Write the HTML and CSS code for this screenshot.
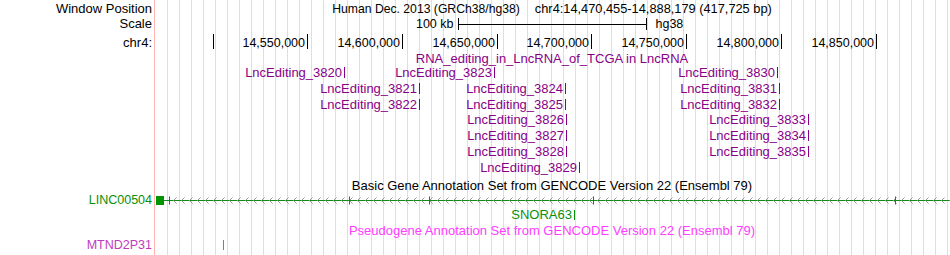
FILE: index.html
```html
<!DOCTYPE html>
<html lang="en">
<head>
    <meta charset="UTF-8">
    <meta name="viewport" content="width=device-width, initial-scale=1.0">
    <title>chr4:14,470,455-14,888,179 - Genome Browser</title>
    <link rel="stylesheet" href="styles.css">
</head>
<body>
    <div class="browser">
        <!-- position / scale / base ruler -->
        <div class="track">
            <div class="row row-pos">
                <div class="lbl">Window Position</div>
                <div class="trk center"><span class="assembly">Human Dec. 2013 (GRCh38/hg38)</span><span class="range">chr4:14,470,455-14,888,179 (417,725 bp)</span></div>
            </div>
            <div class="row row-scale">
                <div class="lbl">Scale</div>
                <div class="trk">
                    <div class="ruler"><span class="kb">100 kb</span><span class="db">hg38</span></div>
                </div>
            </div>
            <div class="row row-chr">
                <div class="lbl">chr4:</div>
                <div class="trk">
                    <span class="item coord" style="right:736px"></span>
                    <span class="item coord" style="right:642px">14,550,000</span>
                    <span class="item coord" style="right:547px">14,600,000</span>
                    <span class="item coord" style="right:452px">14,650,000</span>
                    <span class="item coord" style="right:358px">14,700,000</span>
                    <span class="item coord" style="right:263px">14,750,000</span>
                    <span class="item coord" style="right:168px">14,800,000</span>
                    <span class="item coord" style="right:73px">14,850,000</span>
                </div>
            </div>
        </div>

        <!-- RNA editing in lncRNA -->
        <div class="track lnc">
            <div class="row row-title">
                <div class="lbl"></div>
                <div class="trk center">RNA_editing_in_LncRNA_of_TCGA in LncRNA</div>
            </div>
            <div class="row">
                <div class="lbl"></div>
                <div class="trk">
                    <span class="item" style="right:605px">LncEditing_3820</span>
                    <span class="item" style="right:455px">LncEditing_3823</span>
                    <span class="item" style="right:172px">LncEditing_3830</span>
                </div>
            </div>
            <div class="row">
                <div class="lbl"></div>
                <div class="trk">
                    <span class="item" style="right:530px">LncEditing_3821</span>
                    <span class="item" style="right:384px">LncEditing_3824</span>
                    <span class="item" style="right:170px">LncEditing_3831</span>
                </div>
            </div>
            <div class="row">
                <div class="lbl"></div>
                <div class="trk">
                    <span class="item" style="right:530px">LncEditing_3822</span>
                    <span class="item" style="right:384px">LncEditing_3825</span>
                    <span class="item" style="right:170px">LncEditing_3832</span>
                </div>
            </div>
            <div class="row">
                <div class="lbl"></div>
                <div class="trk">
                    <span class="item" style="right:383px">LncEditing_3826</span>
                    <span class="item" style="right:141px">LncEditing_3833</span>
                </div>
            </div>
            <div class="row">
                <div class="lbl"></div>
                <div class="trk">
                    <span class="item" style="right:383px">LncEditing_3827</span>
                    <span class="item" style="right:141px">LncEditing_3834</span>
                </div>
            </div>
            <div class="row">
                <div class="lbl"></div>
                <div class="trk">
                    <span class="item" style="right:383px">LncEditing_3828</span>
                    <span class="item" style="right:141px">LncEditing_3835</span>
                </div>
            </div>
            <div class="row">
                <div class="lbl"></div>
                <div class="trk">
                    <span class="item" style="right:370px">LncEditing_3829</span>
                </div>
            </div>
        </div>

        <!-- GENCODE basic -->
        <div class="track gencode">
            <div class="row row-title">
                <div class="lbl"></div>
                <div class="trk center">Basic Gene Annotation Set from GENCODE Version 22 (Ensembl 79)</div>
            </div>
            <div class="row">
                <div class="lbl">LINC00504</div>
                <div class="trk">
                    <svg class="gene" width="796" height="16" viewBox="0 0 796 16">
                        <defs>
                            <pattern id="chevrons" x="19" y="4" width="8" height="9" patternUnits="userSpaceOnUse">
                                <path d="M3.5 1.5 L0.5 4.5 L3.5 7.5"/>
                            </pattern>
                        </defs>
                        <line class="intron" x1="10" y1="8.5" x2="796" y2="8.5"/>
                        <rect class="chev" x="19" y="4" width="777" height="9" fill="url(#chevrons)"/>
                        <rect class="exon" x="2" y="4" width="8" height="9"/>
                        <path class="exon-tick" d="M15.5 4.5v8M195.5 4.5v8M275.5 4.5v8M439.5 4.5v8M741.5 4.5v8"/>
                    </svg>
                </div>
            </div>
            <div class="row">
                <div class="lbl"></div>
                <div class="trk">
                    <span class="item" style="right:375px">SNORA63</span>
                </div>
            </div>
        </div>

        <!-- GENCODE pseudogenes -->
        <div class="track pseudo">
            <div class="row row-title">
                <div class="lbl"></div>
                <div class="trk center">Pseudogene Annotation Set from GENCODE Version 22 (Ensembl 79)</div>
            </div>
            <div class="row">
                <div class="lbl">MTND2P31</div>
                <div class="trk">
                    <span class="item" style="right:726px"></span>
                </div>
            </div>
        </div>
    </div>
</body>
</html>
```

FILE: styles.css
```css
* {
    margin: 0;
    padding: 0;
    box-sizing: border-box;
}

body {
    font-family: "Liberation Sans", Arial, Helvetica, sans-serif;
    font-size: 13px;
    color: #000;
    background: #fff;
}

/* pink divider + lavender guidelines every 12px */
.browser {
    width: 950px;
    height: 255px;
    padding-top: 1px;
    overflow: hidden;
    background:
        linear-gradient(#ffb3b3, #ffb3b3) 154px 0 / 1px 100% no-repeat,
        repeating-linear-gradient(90deg, #dcdaf7 0 1px, transparent 1px 12px) 167px 0 / 783px 100% no-repeat;
}

.row {
    display: grid;
    grid-template-columns: 154px 1fr;
    height: 15.8px;
    line-height: 16px;
    white-space: nowrap;
}

.row-pos { height: 15px; }
.row-scale { height: 18.5px; }
.row-chr { height: 16.5px; }
.row-title { height: 14px; }

.lbl {
    text-align: right;
    padding-right: 2px;
}

.trk {
    position: relative;
}

.trk.center {
    text-align: center;
}

/* top ruler */
.assembly {
    font-size: 12.2px;
    margin-right: 15px;
}

.range {
    font-size: 12.8px;
}

.ruler {
    position: relative;
    width: 189px;
    height: 12px;
    margin: 2px auto 0;
    font-size: 12.5px;
    background:
        linear-gradient(#000, #000) left top / 1px 100% no-repeat,
        linear-gradient(#000, #000) right top / 1px 100% no-repeat,
        linear-gradient(#000, #000) 0 6px / 100% 1px no-repeat;
}

.ruler .kb {
    position: absolute;
    right: 100%;
    top: -2px;
    padding-right: 4px;
}

.ruler .db {
    position: absolute;
    left: 100%;
    top: -2px;
    padding-left: 9px;
}

/* features: label sits left of a 1px tick */
.item {
    position: absolute;
    top: 0;
    padding-right: 3px;
    min-height: 16px;
}

.item::after {
    content: "";
    position: absolute;
    right: 0;
    top: 2px;
    width: 1px;
    height: 11px;
    background: currentColor;
}

.coord {
    font-size: 12.5px;
}

.coord::after {
    top: -1px;
    height: 15px;
}

/* track colours */
.lnc {
    color: #870087;
    margin-bottom: 2px;
}

.gencode .row-title {
    color: #000;
}

.gencode .lbl,
.gencode .item {
    color: #0a8f0a;
}

.gencode .lbl {
    font-size: 12.5px;
}

.gencode .item::after {
    top: 3px;
    height: 10px;
}

.gene {
    display: block;
}

.gene .intron {
    stroke: #12891a;
    stroke-width: 1;
}

.gene .exon {
    fill: #009400;
}

.gene .exon-tick {
    stroke: #0a8f0a;
    stroke-width: 1;
}

.gene pattern path {
    fill: none;
    stroke: #9a9a9a;
    stroke-width: 1;
}

.pseudo .row-title {
    color: #ff3dff;
}

.pseudo .lbl {
    color: #c03ac0;
    font-size: 12.5px;
}

.pseudo .item {
    color: #d640d6;
}

.pseudo .item::after {
    top: 3px;
    height: 10px;
}
```
